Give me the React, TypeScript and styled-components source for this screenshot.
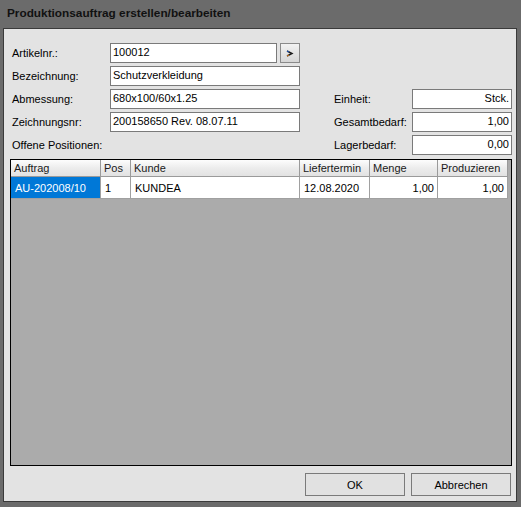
import styled, { createGlobalStyle } from "styled-components";

const GlobalStyle = createGlobalStyle`
  html, body {
    margin: 0;
    padding: 0;
    background: #6b6b6b;
  }
  body {
    font-family: "Liberation Sans", Arial, sans-serif;
    font-size: 11px;
    color: #000;
  }
`;

const Window = styled.div`
  box-sizing: border-box;
  width: 521px;
  height: 507px;
  background: #6b6b6b;
  padding: 0 4px 5px 3px;
  display: flex;
  flex-direction: column;
`;

const TitleBar = styled.div`
  height: 28px;
  padding: 6px 0 0 4px;
  box-sizing: border-box;
  font-size: 11.8px;
  font-weight: bold;
  color: #111;
`;

const Panel = styled.div`
  flex: 1;
  box-sizing: border-box;
  background: #e3e3e3;
  border: 1px solid #3a3a3a;
  padding: 14px 4px 5px 6px;
  display: flex;
  flex-direction: column;
`;

const Form = styled.div`
  display: grid;
  grid-template-columns: 100px 170px 20px 32px 80px 100px;
  grid-template-rows: repeat(5, 20px);
  row-gap: 3px;
  margin-bottom: 4px;
`;

const Label = styled.div<{ $col: number; $row: number; $span?: number }>`
  grid-column: ${(p) => p.$col} / span ${(p) => p.$span ?? 1};
  grid-row: ${(p) => p.$row};
  display: flex;
  align-items: center;
  padding-left: 2px;
  white-space: nowrap;
`;

const Field = styled.div<{ $col: number; $row: number; $span?: number; $right?: boolean; $gap?: boolean }>`
  grid-column: ${(p) => p.$col} / span ${(p) => p.$span ?? 1};
  grid-row: ${(p) => p.$row};
  box-sizing: border-box;
  height: 20px;
  background: #fff;
  border: 1px solid #7a7a7a;
  padding: 0 2px 2px;
  display: flex;
  align-items: center;
  justify-content: ${(p) => (p.$right ? "flex-end" : "flex-start")};
  margin-right: ${(p) => (p.$gap ? "3px" : "0")};
`;

const SmallButton = styled.div`
  grid-column: 3;
  grid-row: 1;
  box-sizing: border-box;
  height: 20px;
  border: 1px solid #8a8a8a;
  background: linear-gradient(#f2f2f2, #d6d6d6);
  display: flex;
  align-items: center;
  justify-content: center;
`;

const Table = styled.div`
  flex: 1;
  box-sizing: border-box;
  background: #ababab;
  border: 1px solid #000;
  display: flex;
  flex-direction: column;
`;

const COLS = "90px 30px 169px 70px 68px 70px";

const HeaderRow = styled.div`
  display: grid;
  grid-template-columns: ${COLS};
  height: 17px;
`;

const HeaderCell = styled.div`
  box-sizing: border-box;
  background: linear-gradient(#fdfdfd, #ececec 50%, #e2e2e2);
  border-right: 1px solid #9a9a9a;
  border-bottom: 1px solid #9a9a9a;
  padding: 2px 3px 0;
  color: #1a1a1a;
  white-space: nowrap;
  overflow: hidden;
`;

const DataRow = styled.div`
  display: grid;
  grid-template-columns: ${COLS};
  height: 22px;
`;

const DataCell = styled.div<{ $selected?: boolean; $right?: boolean }>`
  box-sizing: border-box;
  background: ${(p) => (p.$selected ? "#0078d7" : "#fff")};
  color: ${(p) => (p.$selected ? "#fff" : "#000")};
  border-right: 1px solid #a0a0a0;
  border-bottom: 1px solid #a0a0a0;
  padding: 0 3px 0 4px;
  display: flex;
  align-items: center;
  justify-content: ${(p) => (p.$right ? "flex-end" : "flex-start")};
  white-space: nowrap;
`;

const Footer = styled.div`
  display: flex;
  justify-content: flex-end;
  gap: 6px;
  padding: 7px 1px 0 0;
`;

const Button = styled.div`
  box-sizing: border-box;
  width: 100px;
  height: 23px;
  border: 1px solid #7a7a7a;
  background: #e1e1e1;
  display: flex;
  align-items: center;
  justify-content: center;
`;

export default function App() {
  return (
    <>
      <GlobalStyle />
      <Window>
        <TitleBar>Produktionsauftrag erstellen/bearbeiten</TitleBar>
        <Panel>
          <Form>
            <Label $col={1} $row={1}>Artikelnr.:</Label>
            <Field $col={2} $row={1} $gap>100012</Field>
            <SmallButton>
              <svg width="8" height="7" viewBox="0 0 8 7">
                <path d="M1 1 L6 3.5 L1 6" stroke="#1a1a1a" strokeWidth="1.4" fill="none" />
                <path d="M1 1 L3 2" stroke="#2060d0" strokeWidth="1" />
                <path d="M1 6 L3 5" stroke="#e08020" strokeWidth="1" />
              </svg>
            </SmallButton>

            <Label $col={1} $row={2}>Bezeichnung:</Label>
            <Field $col={2} $row={2} $span={2}>Schutzverkleidung</Field>

            <Label $col={1} $row={3}>Abmessung:</Label>
            <Field $col={2} $row={3} $span={2}>680x100/60x1.25</Field>

            <Label $col={1} $row={4}>Zeichnungsnr:</Label>
            <Field $col={2} $row={4} $span={2}>200158650 Rev. 08.07.11</Field>

            <Label $col={1} $row={5} $span={3}>Offene Positionen:</Label>

            <Label $col={5} $row={3}>Einheit:</Label>
            <Field $col={6} $row={3} $right>Stck.</Field>

            <Label $col={5} $row={4}>Gesamtbedarf:</Label>
            <Field $col={6} $row={4} $right>1,00</Field>

            <Label $col={5} $row={5}>Lagerbedarf:</Label>
            <Field $col={6} $row={5} $right>0,00</Field>
          </Form>

          <Table>
            <HeaderRow>
              <HeaderCell>Auftrag</HeaderCell>
              <HeaderCell>Pos</HeaderCell>
              <HeaderCell>Kunde</HeaderCell>
              <HeaderCell>Liefertermin</HeaderCell>
              <HeaderCell>Menge</HeaderCell>
              <HeaderCell>Produzieren</HeaderCell>
            </HeaderRow>
            <DataRow>
              <DataCell $selected>AU-202008/10</DataCell>
              <DataCell>1</DataCell>
              <DataCell>KUNDEA</DataCell>
              <DataCell>12.08.2020</DataCell>
              <DataCell $right>1,00</DataCell>
              <DataCell $right>1,00</DataCell>
            </DataRow>
          </Table>

          <Footer>
            <Button>OK</Button>
            <Button>Abbrechen</Button>
          </Footer>
        </Panel>
      </Window>
    </>
  );
}
